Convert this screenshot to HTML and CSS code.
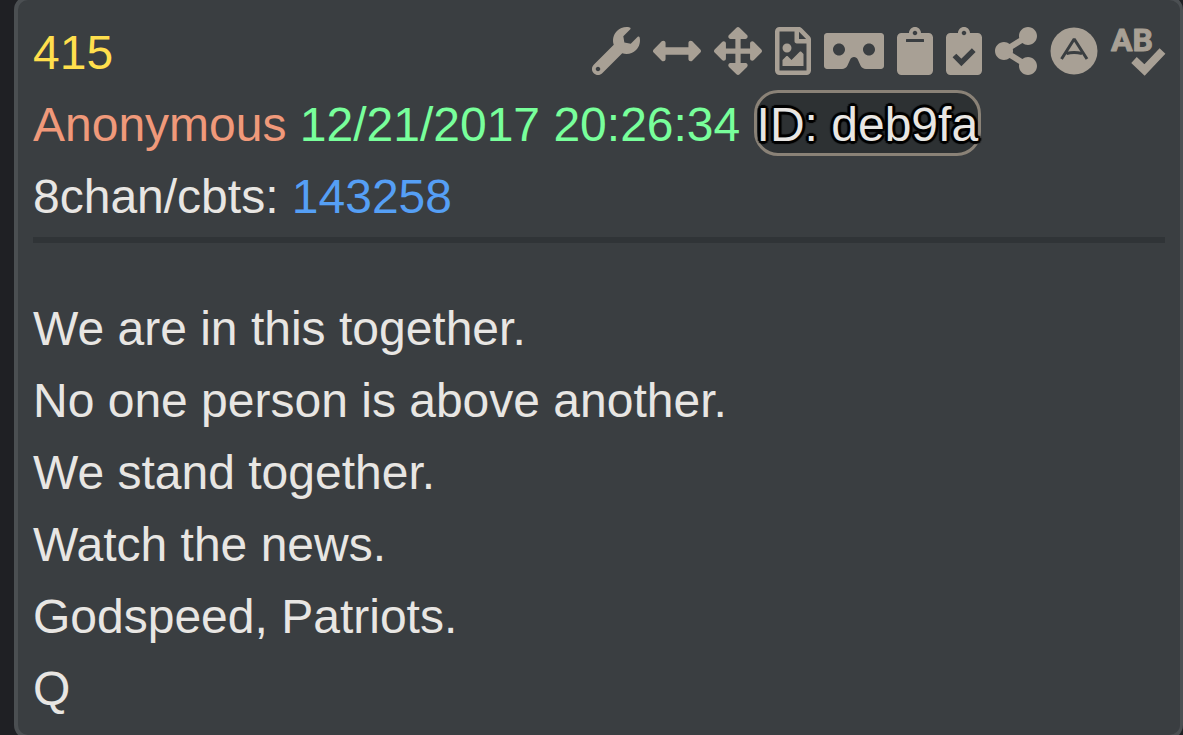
FILE: index.html
```html
<!DOCTYPE html>
<html lang="en">
<head>
<meta charset="utf-8">
<meta name="viewport" content="width=device-width, initial-scale=1">
<title>Post 415</title>
<link rel="stylesheet" href="styles.css">
</head>
<body>
<article class="card">
  <header class="post-header">
    <div class="top-row">
      <span class="number">415</span>
      <div class="tools">
        <button type="button" class="tool" aria-label="Tools"><svg class="icon" width="48" height="48" viewBox="0 0 512 512"><path d="M507.73 109.1c-2.24-9.03-13.54-12.09-20.12-5.51l-74.36 74.36-67.88-11.31-11.31-67.88 74.36-74.36c6.62-6.62 3.43-17.9-5.66-20.16-47.38-11.74-99.55.91-136.58 37.93-39.64 39.64-50.55 97.1-34.05 147.2L18.74 402.76c-24.99 24.99-24.99 65.51 0 90.5 24.99 24.99 65.51 24.99 90.5 0l213.21-213.21c50.12 16.71 107.47 5.68 147.37-34.22 37.07-37.07 49.7-89.32 37.91-136.73zM64 472c-13.25 0-24-10.75-24-24 0-13.26 10.75-24 24-24s24 10.74 24 24c0 13.25-10.75 24-24 24z"/></svg></button>
        <button type="button" class="tool" aria-label="Widen"><svg class="icon" width="48" height="48" viewBox="0 0 512 512"><path d="M377.941 169.941V216H134.059v-46.059c0-21.382-25.851-32.09-40.971-16.971L7.029 239.029c-9.373 9.373-9.373 24.568 0 33.941l86.059 86.059c15.119 15.119 40.971 4.411 40.971-16.971V296h243.882v46.059c0 21.382 25.851 32.09 40.971 16.971l86.059-86.059c9.373-9.373 9.373-24.568 0-33.941l-86.059-86.059c-15.119-15.12-40.971-4.412-40.971 16.97z"/></svg></button>
        <button type="button" class="tool" aria-label="Move"><svg class="icon" width="48" height="48" viewBox="0 0 512 512"><path d="M352.201 425.775l-79.196 79.196c-9.373 9.373-24.568 9.373-33.941 0l-79.196-79.196c-15.119-15.119-4.411-40.971 16.971-40.97h51.162L228 284H127.196v51.162c0 21.382-25.851 32.09-40.971 16.971L7.029 272.937c-9.373-9.373-9.373-24.569 0-33.941L86.225 159.8c15.119-15.119 40.971-4.411 40.971 16.971V228H228V127.196h-51.23c-21.382 0-32.09-25.851-16.971-40.971l79.196-79.196c9.373-9.373 24.568-9.373 33.941 0l79.196 79.196c15.119 15.119 4.411 40.971-16.971 40.971h-51.162V228h100.804v-51.162c0-21.382 25.851-32.09 40.97-16.971l79.196 79.196c9.373 9.373 9.373 24.569 0 33.941L425.773 352.2c-15.119 15.119-40.971 4.411-40.97-16.971V284H284v100.804h51.23c21.382 0 32.09 25.851 16.971 40.971z"/></svg></button>
        <button type="button" class="tool" aria-label="Save as image"><svg class="icon" width="36" height="48" viewBox="0 0 384 512"><path d="M369.9 97.9L286 14C277 5 264.8-.1 252.1-.1H48C21.5 0 0 21.5 0 48v416c0 26.5 21.5 48 48 48h288c26.5 0 48-21.5 48-48V131.9c0-12.7-5.1-25-14.1-34zM332.1 128H256V51.9l76.1 76.1zM48 464V48h160v104c0 13.3 10.7 24 24 24h104v288H48zm32-48h224V288l-23.5-23.5c-4.7-4.7-12.3-4.7-17 0L176 352l-39.5-39.5c-4.7-4.7-12.3-4.7-17 0L80 352v64zm48-240c-26.5 0-48 21.5-48 48s21.5 48 48 48 48-21.5 48-48-21.5-48-48-48z"/></svg></button>
        <button type="button" class="tool" aria-label="Viewer"><svg class="icon" width="60" height="48" viewBox="0 0 640 512"><path d="M608 64H32C14.33 64 0 78.33 0 96v320c0 17.67 14.33 32 32 32h160.22c25.19 0 48.03-14.77 58.36-37.74l27.74-61.64C286.21 331.08 302.35 320 320 320s33.79 11.08 41.68 28.62l27.74 61.64C399.75 433.23 422.6 448 447.78 448H608c17.67 0 32-14.33 32-32V96c0-17.67-14.33-32-32-32zM160 304c-35.35 0-64-28.65-64-64s28.65-64 64-64 64 28.65 64 64-28.65 64-64 64zm320 0c-35.35 0-64-28.65-64-64s28.65-64 64-64 64 28.65 64 64-28.65 64-64 64z"/></svg></button>
        <button type="button" class="tool" aria-label="Copy"><svg class="icon" width="36" height="48" viewBox="0 0 384 512"><path d="M384 112v352c0 26.51-21.49 48-48 48H48c-26.51 0-48-21.49-48-48V112c0-26.51 21.49-48 48-48h80c0-35.29 28.71-64 64-64s64 28.71 64 64h80c26.51 0 48 21.49 48 48zM192 40c-13.255 0-24 10.745-24 24s10.745 24 24 24 24-10.745 24-24-10.745-24-24-24m96 114v-20a6 6 0 0 0-6-6H102a6 6 0 0 0-6 6v20a6 6 0 0 0 6 6h180a6 6 0 0 0 6-6z"/></svg></button>
        <button type="button" class="tool" aria-label="Copy selected"><svg class="icon" width="36" height="48" viewBox="0 0 384 512"><path d="M384 112v352c0 26.51-21.49 48-48 48H48c-26.51 0-48-21.49-48-48V112c0-26.51 21.49-48 48-48h80c0-35.29 28.71-64 64-64s64 28.71 64 64h80c26.51 0 48 21.49 48 48zM192 40c-13.255 0-24 10.745-24 24s10.745 24 24 24 24-10.745 24-24-10.745-24-24-24"/><path class="cut" stroke-width="56" d="M90 304l74 74 132-132"/></svg></button>
        <button type="button" class="tool" aria-label="Share"><svg class="icon" width="42" height="48" viewBox="0 0 448 512"><path d="M352 320c-22.608 0-43.387 7.819-59.79 20.895l-102.486-64.054a96.551 96.551 0 0 0 0-41.683l102.486-64.054C308.613 184.181 329.392 192 352 192c53.019 0 96-42.981 96-96S405.019 0 352 0s-96 42.981-96 96c0 7.158.79 14.13 2.276 20.841L155.79 180.895C139.387 167.819 118.608 160 96 160c-53.019 0-96 42.981-96 96s42.981 96 96 96c22.608 0 43.387-7.819 59.79-20.895l102.486 64.054A96.301 96.301 0 0 0 256 416c0 53.019 42.981 96 96 96s96-42.981 96-96-42.981-96-96-96z"/></svg></button>
        <button type="button" class="tool" aria-label="Archive"><svg class="icon" width="48" height="48" viewBox="0 0 48 48"><circle cx="24" cy="24" r="23.5"/><path class="cut" stroke-width="3" stroke-linejoin="bevel" d="M11.500 32L24.200 12l12.800 20M16.500 26.500q7.500-2 15.500 0"/></svg></button>
        <button type="button" class="tool" aria-label="Check spelling"><svg class="icon" width="54" height="48" viewBox="0 0 54 48"><text class="letters" x="0" y="24">AB</text><path class="mark" d="M23 33l10.500 10L51.500 24"/></svg></button>
      </div>
    </div>
    <div class="line"><span class="name">Anonymous</span> <time class="date" datetime="2017-12-21T20:26:34">12/21/2017 20:26:34</time> <span class="user-id">ID: deb9fa</span></div>
    <div class="line">8chan/cbts: <a class="link" href="#143258">143258</a></div>
  </header>
  <hr class="rule">
  <div class="message">
    <p>We are in this together.</p>
    <p>No one person is above another.</p>
    <p>We stand together.</p>
    <p>Watch the news.</p>
    <p>Godspeed, Patriots.</p>
    <p>Q</p>
  </div>
</article>
</body>
</html>
```
FILE: styles.css
```css
* {
  box-sizing: border-box;
}

body {
  margin: 0;
  min-height: 100vh;
  display: flex;
  overflow: hidden;
  background: #1f2024;
  color: #e8e6e3;
  font: 48px/72px "Liberation Sans", Arial, sans-serif;
}

.card {
  flex: 1;
  margin: -4px 0 -4px 14px;
  padding: 17px 15px 9px;
  border: 4px solid #4b4f52;
  border-right-width: 3px;
  border-radius: 14px;
  background: #3a3e41;
}

.top-row {
  display: flex;
  justify-content: space-between;
  align-items: flex-start;
}

.number {
  color: #ffdf4d;
}

.tools {
  display: flex;
  gap: 13px;
  padding-top: 10px;
}

.tool {
  display: block;
  padding: 0;
  border: 0;
  background: none;
  color: #a8a095;
  cursor: pointer;
}

.icon {
  display: block;
  overflow: visible;
  fill: currentColor;
}

.cut {
  fill: none;
  stroke: #3a3e41;
}

.letters {
  font: bold 32px Roboto, "Liberation Sans", sans-serif;
  stroke: currentColor;
  stroke-width: 1px;
  stroke-linejoin: round;
}

.mark {
  fill: none;
  stroke: currentColor;
  stroke-width: 8px;
}

.name {
  color: #f0997a;
}

.date {
  color: #78ff9b;
}

.user-id {
  display: inline-block;
  padding-top: 4px;
  border: 3px solid #8a8277;
  border-radius: 24px;
  background: #2d3133;
  line-height: 56px;
  white-space: nowrap;
  text-shadow: -2px -2px 1px #000, 2px -2px 1px #000, -2px 2px 1px #000, 2px 2px 1px #000, 0 3px 1px #000, 0 -3px 1px #000, 3px 0 1px #000, -3px 0 1px #000;
}

.link {
  color: #559ff5;
  text-decoration: none;
}

.rule {
  height: 6px;
  margin: 4px 0 50px;
  border: 0;
  background: #303437;
}

.message p {
  margin: 0;
}
```
